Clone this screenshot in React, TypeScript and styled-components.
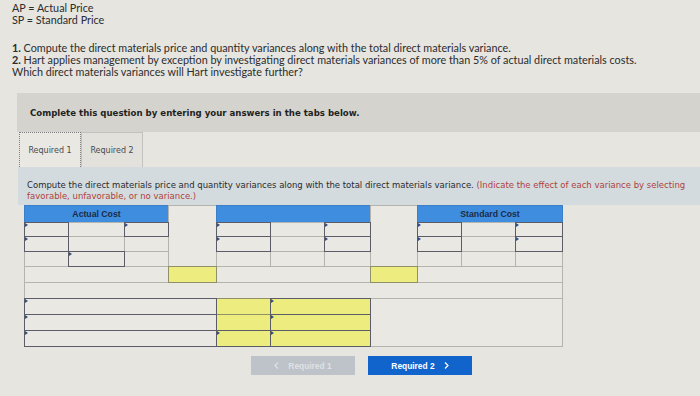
import React from "react";
import styled, { createGlobalStyle, css } from "styled-components";

const GlobalStyle = createGlobalStyle`
  html, body { margin: 0; padding: 0; }
  body {
    background: #e6e5e0;
    width: 700px;
    height: 396px;
    overflow: hidden;
    font-family: Lato, "Open Sans", sans-serif;
    color: #2a2a2c;
  }
`;

const Page = styled.div`
  display: flex;
  flex-direction: column;
  padding-top: 2px;
`;

const Intro = styled.div`
  padding-left: 12px;
  font-family: Lato, "Open Sans", sans-serif;
  font-size: 10.8px;
  line-height: 12px;
  color: #2c2c2e;
`;

const Questions = styled(Intro)`
  margin-top: 16px;
`;

const Banner = styled.div`
  margin: 15px 0 0 17px;
  height: 39px;
  background: #d4d3ce;
  display: flex;
  align-items: center;
  padding-left: 13px;
  font-family: "DejaVu Sans", Verdana, sans-serif;
  font-weight: bold;
  font-size: 8.6px;
  color: #1f1f22;
`;

const Tabs = styled.div`
  display: flex;
  margin-left: 19px;
  height: 35px;
`;

const Tab = styled.div<{ $active?: boolean }>`
  width: 62px;
  display: flex;
  align-items: center;
  justify-content: center;
  font-family: "DejaVu Sans", Verdana, sans-serif;
  font-size: 8px;
  color: #4a4a4e;
  box-sizing: border-box;
  ${(p) =>
    p.$active
      ? css`
          border: 1px dotted #7d7d80;
          border-bottom: none;
          background: #e9e8e3;
        `
      : css`
          border: 1px solid #c2c1bd;
          border-bottom: none;
          background: #e2e1dc;
        `}
`;

const Instructions = styled.div`
  margin-left: 18px;
  height: 38px;
  box-sizing: border-box;
  padding: 13px 0 0 9px;
  background: #d3dbdf;
  font-family: "DejaVu Sans", Verdana, sans-serif;
  font-size: 8.5px;
  line-height: 10.5px;
  color: #2a2a2e;
`;

const Red = styled.span`
  color: #b03f3c;
`;

const Table = styled.div`
  display: grid;
  grid-template-columns: 44px 56px 44px 48px 54px 54px 46px 47px 44px 54px 47px;
  grid-template-rows: 17px 14px 15px 15px 16px 16px 16px 16px 16px;
  margin: 0 0 0 24px;
  width: 539px;
`;

type Kind = "plain" | "input" | "yellow" | "yinput" | "header";

const Cell = styled.div<{ $c: string; $r: string; $k: Kind }>`
  grid-column: ${(p) => p.$c};
  grid-row: ${(p) => p.$r};
  margin: 0 -1px -1px 0;
  position: relative;
  box-sizing: border-box;
  border: 1px solid #b4b3ae;
  background: #e9e8e3;
  ${(p) =>
    (p.$k === "input" || p.$k === "yinput") &&
    css`
      border: 1.5px solid #5b5c68;
      z-index: 2;
      &::before {
        content: "";
        position: absolute;
        left: 0;
        top: 0;
        border-left: 3px solid #2f4f86;
        border-top: 2px solid transparent;
        border-bottom: 2px solid transparent;
      }
    `}
  ${(p) =>
    (p.$k === "yellow" || p.$k === "yinput") &&
    css`
      background: #edec7e;
    `}
  ${(p) =>
    p.$k === "yellow" &&
    css`
      border-color: #8f8f6a;
      z-index: 1;
    `}
  ${(p) =>
    p.$k === "header" &&
    css`
      background: #3f8ddf;
      border-color: #3a7fc8;
      display: flex;
      align-items: center;
      justify-content: center;
      font-family: "Liberation Sans", Arial, sans-serif;
      font-weight: bold;
      font-size: 8.7px;
      color: #1c2b46;
    `}
`;

const Buttons = styled.div`
  display: flex;
  gap: 13px;
  margin: 10px 0 0 251px;
`;

const Btn = styled.div<{ $primary?: boolean }>`
  width: 104px;
  height: 19px;
  display: flex;
  align-items: center;
  justify-content: center;
  gap: 9px;
  font-family: "Liberation Sans", Arial, sans-serif;
  font-weight: bold;
  font-size: 8.4px;
  background: ${(p) => (p.$primary ? "#1264cd" : "#bdc3c9")};
  color: ${(p) => (p.$primary ? "#ffffff" : "#dde1e5")};
`;

const Chevron = ({ dir }: { dir: "l" | "r" }) => (
  <svg width="5" height="7" viewBox="0 0 5 7">
    <path
      d={dir === "l" ? "M4 0.5 L1 3.5 L4 6.5" : "M1 0.5 L4 3.5 L1 6.5"}
      fill="none"
      stroke="currentColor"
      strokeWidth="1.2"
    />
  </svg>
);

const cells: { c: string; r: string; k: Kind; t?: string }[] = [
  { c: "1 / 4", r: "1", k: "header", t: "Actual Cost" },
  { c: "4", r: "1 / 5", k: "plain" },
  { c: "5 / 8", r: "1", k: "header" },
  { c: "8", r: "1 / 5", k: "plain" },
  { c: "9 / 12", r: "1", k: "header", t: "Standard Cost" },
  // row 2
  { c: "1", r: "2", k: "input" },
  { c: "2", r: "2", k: "plain" },
  { c: "3", r: "2", k: "input" },
  { c: "5", r: "2", k: "input" },
  { c: "6", r: "2", k: "plain" },
  { c: "7", r: "2", k: "input" },
  { c: "9", r: "2", k: "input" },
  { c: "10", r: "2", k: "plain" },
  { c: "11", r: "2", k: "input" },
  // row 3
  { c: "1", r: "3", k: "input" },
  { c: "2", r: "3", k: "plain" },
  { c: "3", r: "3", k: "plain" },
  { c: "5", r: "3", k: "input" },
  { c: "6", r: "3", k: "plain" },
  { c: "7", r: "3", k: "input" },
  { c: "9", r: "3", k: "input" },
  { c: "10", r: "3", k: "plain" },
  { c: "11", r: "3", k: "input" },
  // row 4
  { c: "1", r: "4", k: "plain" },
  { c: "2", r: "4", k: "input" },
  { c: "3", r: "4", k: "plain" },
  { c: "5", r: "4", k: "plain" },
  { c: "6", r: "4", k: "plain" },
  { c: "7", r: "4", k: "plain" },
  { c: "9", r: "4", k: "plain" },
  { c: "10", r: "4", k: "plain" },
  { c: "11", r: "4", k: "plain" },
  // row 5
  { c: "1 / 4", r: "5", k: "plain" },
  { c: "4", r: "5", k: "yellow" },
  { c: "5 / 8", r: "5", k: "plain" },
  { c: "8", r: "5", k: "yellow" },
  { c: "9 / 12", r: "5", k: "plain" },
  // row 6
  { c: "1 / 12", r: "6", k: "plain" },
  // rows 7-9
  { c: "1 / 5", r: "7", k: "input" },
  { c: "1 / 5", r: "8", k: "input" },
  { c: "1 / 5", r: "9", k: "input" },
  { c: "5", r: "7", k: "yellow" },
  { c: "5", r: "8", k: "yellow" },
  { c: "5", r: "9", k: "yinput" },
  { c: "6 / 8", r: "7", k: "yinput" },
  { c: "6 / 8", r: "8", k: "yinput" },
  { c: "6 / 8", r: "9", k: "yinput" },
  { c: "8 / 12", r: "7 / 10", k: "plain" },
];

export default function App() {
  return (
    <>
      <GlobalStyle />
      <Page>
        <Intro>
          <div>AP = Actual Price</div>
          <div>SP = Standard Price</div>
        </Intro>
        <Questions>
          <div>
            <b>1.</b> Compute the direct materials price and quantity variances along with the total direct materials
            variance.
          </div>
          <div>
            <b>2.</b> Hart applies management by exception by investigating direct materials variances of more than 5% of
            actual direct materials costs.
          </div>
          <div>Which direct materials variances will Hart investigate further?</div>
        </Questions>
        <Banner>Complete this question by entering your answers in the tabs below.</Banner>
        <Tabs>
          <Tab $active>Required 1</Tab>
          <Tab>Required 2</Tab>
        </Tabs>
        <Instructions>
          Compute the direct materials price and quantity variances along with the total direct materials variance.{" "}
          <Red>
            (Indicate the effect of each variance by selecting favorable, unfavorable, or no variance.)
          </Red>
        </Instructions>
        <Table>
          {cells.map((cell, i) => (
            <Cell key={i} $c={cell.c} $r={cell.r} $k={cell.k}>
              {cell.t}
            </Cell>
          ))}
        </Table>
        <Buttons>
          <Btn>
            <Chevron dir="l" />
            Required 1
          </Btn>
          <Btn $primary>
            Required 2
            <Chevron dir="r" />
          </Btn>
        </Buttons>
      </Page>
    </>
  );
}
